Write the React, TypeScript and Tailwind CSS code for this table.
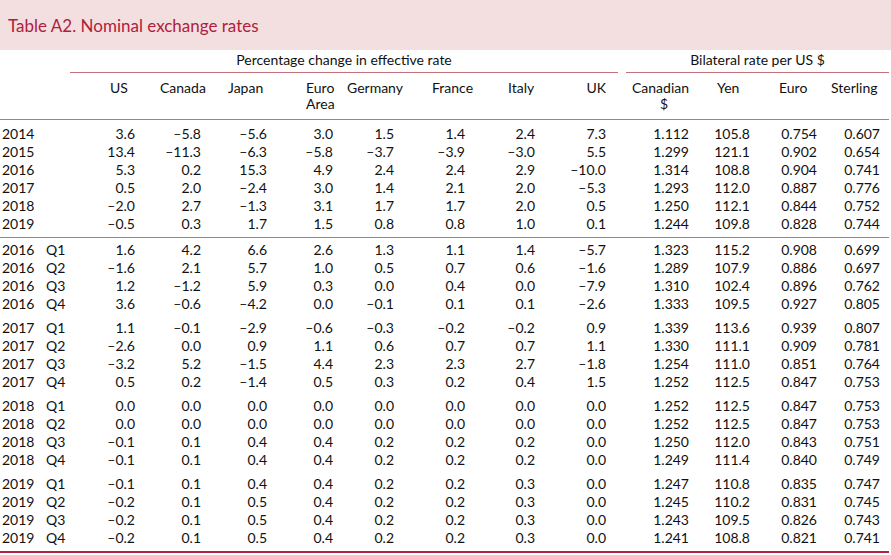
const FONT = "font-['Lato','Open_Sans',sans-serif]";

const annual: [string, string[]][] = [
  ["2014", ["3.6", "–5.8", "–5.6", "3.0", "1.5", "1.4", "2.4", "7.3", "1.112", "105.8", "0.754", "0.607"]],
  ["2015", ["13.4", "–11.3", "–6.3", "–5.8", "–3.7", "–3.9", "–3.0", "5.5", "1.299", "121.1", "0.902", "0.654"]],
  ["2016", ["5.3", "0.2", "15.3", "4.9", "2.4", "2.4", "2.9", "–10.0", "1.314", "108.8", "0.904", "0.741"]],
  ["2017", ["0.5", "2.0", "–2.4", "3.0", "1.4", "2.1", "2.0", "–5.3", "1.293", "112.0", "0.887", "0.776"]],
  ["2018", ["–2.0", "2.7", "–1.3", "3.1", "1.7", "1.7", "2.0", "0.5", "1.250", "112.1", "0.844", "0.752"]],
  ["2019", ["–0.5", "0.3", "1.7", "1.5", "0.8", "0.8", "1.0", "0.1", "1.244", "109.8", "0.828", "0.744"]],
];

const quarterly: { year: string; rows: string[][] }[] = [
  {
    year: "2016",
    rows: [
      ["1.6", "4.2", "6.6", "2.6", "1.3", "1.1", "1.4", "–5.7", "1.323", "115.2", "0.908", "0.699"],
      ["–1.6", "2.1", "5.7", "1.0", "0.5", "0.7", "0.6", "–1.6", "1.289", "107.9", "0.886", "0.697"],
      ["1.2", "–1.2", "5.9", "0.3", "0.0", "0.4", "0.0", "–7.9", "1.310", "102.4", "0.896", "0.762"],
      ["3.6", "–0.6", "–4.2", "0.0", "–0.1", "0.1", "0.1", "–2.6", "1.333", "109.5", "0.927", "0.805"],
    ],
  },
  {
    year: "2017",
    rows: [
      ["1.1", "–0.1", "–2.9", "–0.6", "–0.3", "–0.2", "–0.2", "0.9", "1.339", "113.6", "0.939", "0.807"],
      ["–2.6", "0.0", "0.9", "1.1", "0.6", "0.7", "0.7", "1.1", "1.330", "111.1", "0.909", "0.781"],
      ["–3.2", "5.2", "–1.5", "4.4", "2.3", "2.3", "2.7", "–1.8", "1.254", "111.0", "0.851", "0.764"],
      ["0.5", "0.2", "–1.4", "0.5", "0.3", "0.2", "0.4", "1.5", "1.252", "112.5", "0.847", "0.753"],
    ],
  },
  {
    year: "2018",
    rows: [
      ["0.0", "0.0", "0.0", "0.0", "0.0", "0.0", "0.0", "0.0", "1.252", "112.5", "0.847", "0.753"],
      ["0.0", "0.0", "0.0", "0.0", "0.0", "0.0", "0.0", "0.0", "1.252", "112.5", "0.847", "0.753"],
      ["–0.1", "0.1", "0.4", "0.4", "0.2", "0.2", "0.2", "0.0", "1.250", "112.0", "0.843", "0.751"],
      ["–0.1", "0.1", "0.4", "0.4", "0.2", "0.2", "0.2", "0.0", "1.249", "111.4", "0.840", "0.749"],
    ],
  },
  {
    year: "2019",
    rows: [
      ["–0.1", "0.1", "0.4", "0.4", "0.2", "0.2", "0.3", "0.0", "1.247", "110.8", "0.835", "0.747"],
      ["–0.2", "0.1", "0.5", "0.4", "0.2", "0.2", "0.3", "0.0", "1.245", "110.2", "0.831", "0.745"],
      ["–0.2", "0.1", "0.5", "0.4", "0.2", "0.2", "0.3", "0.0", "1.243", "109.5", "0.826", "0.743"],
      ["–0.2", "0.1", "0.5", "0.4", "0.2", "0.2", "0.3", "0.0", "1.241", "108.8", "0.821", "0.741"],
    ],
  },
];

const GRID =
  "grid grid-cols-[70px_65px_66px_66px_66px_61px_71px_70px_71px_20px_63px_61px_67px_63px]";

const DataRow = ({ year, quarter, values }: { year: string; quarter?: string; values: string[] }) => {
  return (
    <div className={`${GRID} h-[18px] items-center leading-[18px]`}>
      <div className="flex pl-[2px]">
        <span className="w-[44px]">{year}</span>
        {quarter && <span>{quarter}</span>}
      </div>
      {values.slice(0, 8).map((v, i) => (
        <div key={i} className="text-right">
          {v}
        </div>
      ))}
      <div></div>
      {values.slice(8).map((v, i) => (
        <div key={i + 8} className="text-right">
          {v}
        </div>
      ))}
    </div>
  );
};

export default function App() {
  return (
    <div className={`w-[891px] h-[555px] bg-white text-[#111] text-[14px] ${FONT}`}>
      <div className="h-[50px] bg-[#f3dfdf] flex items-center pl-[8px] pt-[2px]">
        <h1 className="text-[17px] text-[#b0203c]">Table A2. Nominal exchange rates</h1>
      </div>

      <div className="w-[889px]">
        {/* group headers */}
        <div className="grid grid-cols-[70px_548px_8px_263px] h-[23px]">
          <div></div>
          <div className="border-b border-[#c4717c] text-center leading-[20px]">
            Percentage change in effective rate
          </div>
          <div></div>
          <div className="border-b border-[#c4717c] text-center leading-[20px]">
            Bilateral rate per US $
          </div>
        </div>

        {/* column headers */}
        <div className={`${GRID} h-[47px] pt-[7px] leading-[16px] border-b border-[#c4717c] whitespace-nowrap`}>
          <div></div>
          <div className="pl-[40px]">US</div>
          <div className="pl-[25px]">Canada</div>
          <div className="pl-[27px]">Japan</div>
          <div className="pl-[39px]">
            Euro
            <br />
            Area
          </div>
          <div className="pl-[14px]">Germany</div>
          <div className="pl-[38px]">France</div>
          <div className="pl-[43px]">Italy</div>
          <div className="text-right">UK</div>
          <div></div>
          <div className="pl-[6px]">
            Canadian
            <br />
            <span className="pl-[28px]">$</span>
          </div>
          <div className="pl-[28px]">Yen</div>
          <div className="pl-[29px]">Euro</div>
          <div className="pl-[14px]">Sterling</div>
        </div>

        {/* annual rows */}
        <div className="pt-[5px] pb-[4px] border-b border-[#c4717c]">
          {annual.map(([y, vals]) => (
            <DataRow key={y} year={y} values={vals} />
          ))}
        </div>

        {/* quarterly rows */}
        <div className="pt-[3px] pb-[4px] flex flex-col gap-[6px] border-b-2 border-[#b0243f]">
          {quarterly.map((g) => (
            <div key={g.year}>
              {g.rows.map((vals, i) => (
                <DataRow key={i} year={g.year} quarter={`Q${i + 1}`} values={vals} />
              ))}
            </div>
          ))}
        </div>
      </div>
    </div>
  );
}
